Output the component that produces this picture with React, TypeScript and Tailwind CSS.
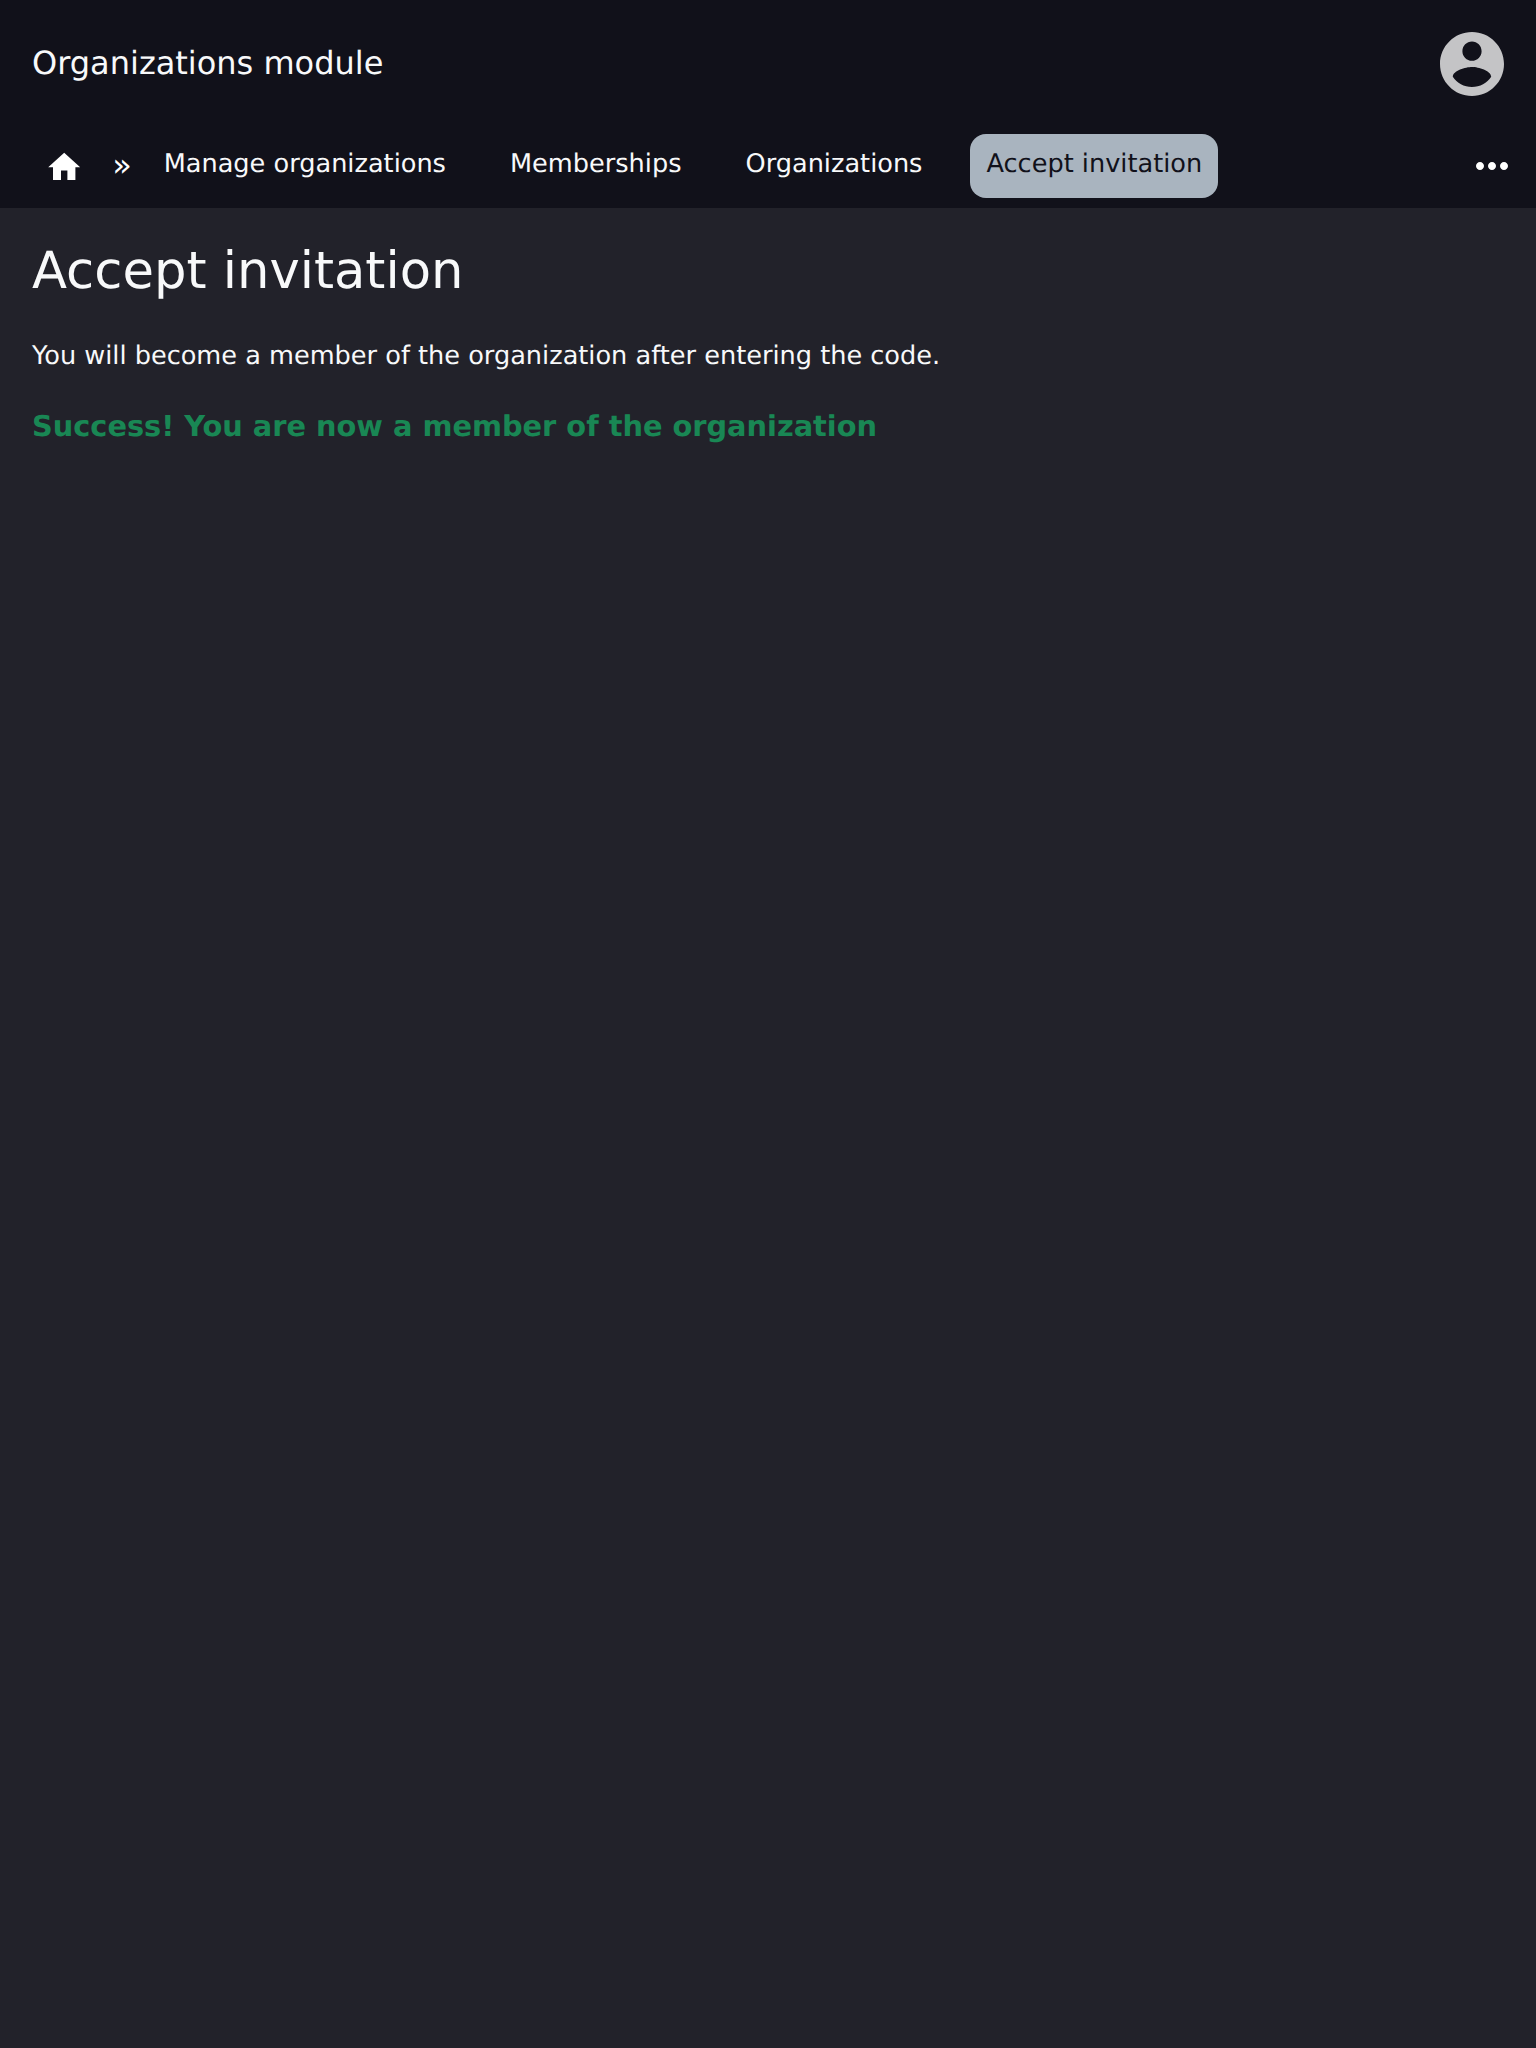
const links = ["Manage organizations", "Memberships", "Organizations"];

export default function App() {
  return (
    <div className="flex min-h-screen flex-col bg-[#22222a] font-['DejaVu_Sans',sans-serif] text-[25.6px] text-[#f8f9fa] [text-rendering:geometricPrecision]">
      <header className="h-[208px] bg-[#11111a]">
        <div className="flex h-32 items-center justify-between px-8">
          <div className="pb-0.5 text-[32px] leading-[48px]">Organizations module</div>
          <svg className="size-16" viewBox="2 2 20 20" fill="#c4c4c6">
            <path d="M12 2C6.48 2 2 6.48 2 12s4.48 10 10 10 10-4.48 10-10S17.52 2 12 2zm0 3c1.66 0 3 1.34 3 3s-1.34 3-3 3-3-1.34-3-3 1.34-3 3-3zm0 14.2c-2.5 0-4.71-1.28-6-3.22.03-1.99 4-3.08 6-3.08 1.99 0 5.97 1.09 6 3.08-1.29 1.94-3.5 3.22-6 3.22z" />
          </svg>
        </div>
        <nav className="flex h-20 items-start pt-1.5 leading-[38px]">
          <a className="ml-[44.8px] pt-[14px]">
            <svg className="size-[38.4px]" viewBox="0 0 24 24" fill="#fff">
              <path d="M10 20v-6h4v6h5v-8h3L12 3 2 12h3v8z" />
            </svg>
          </a>
          <span className="ml-[29px] w-5 pt-3 text-[32px] text-white">»</span>
          <div className="ml-[15.5px] flex gap-8">
            {links.map((l) => (
              <a key={l} className="h-16 px-4 pt-[11px]">{l}</a>
            ))}
            <a className="h-16 rounded-2xl bg-[#a9b4bf] px-4 pt-[11px] text-[#11111a]">Accept invitation</a>
          </div>
          <svg className="mt-2 mr-5 ml-auto size-12" viewBox="0 0 24 24" fill="#fff">
            <path d="M6 10c-1.1 0-2 .9-2 2s.9 2 2 2 2-.9 2-2-.9-2-2-2zm12 0c-1.1 0-2 .9-2 2s.9 2 2 2 2-.9 2-2-.9-2-2-2zm-6 0c-1.1 0-2 .9-2 2s.9 2 2 2 2-.9 2-2-.9-2-2-2z" />
          </svg>
        </nav>
      </header>
      <main className="px-8 pt-[33px]">
        <h1 className="text-[51.2px] leading-[61.4px]">Accept invitation</h1>
        <p className="mt-[35px] leading-[38.4px]">You will become a member of the organization after entering the code.</p>
        <p className="mt-[29px] text-[28.8px] leading-[43.2px] font-bold text-[#198754]">Success! You are now a member of the organization</p>
      </main>
    </div>
  );
}
